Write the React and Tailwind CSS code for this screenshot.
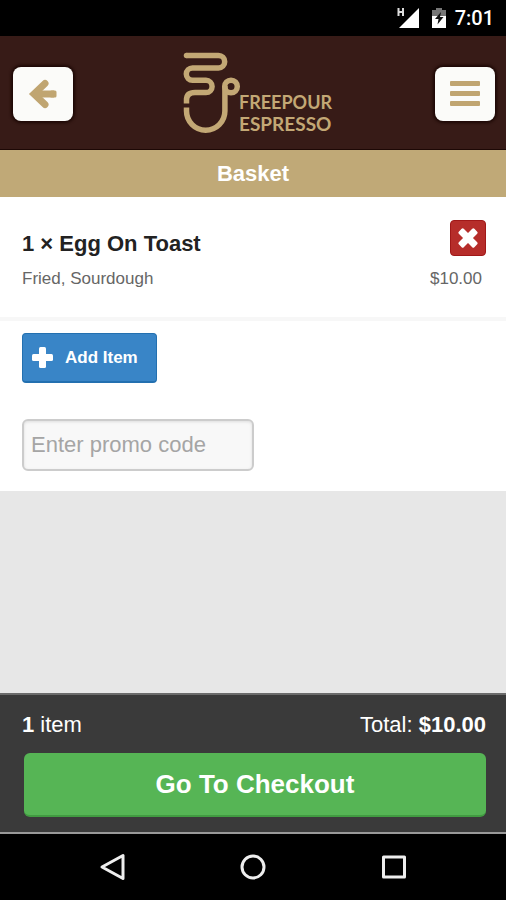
import React, { useState } from 'react';

const StatusBar = () => (
    <div className="flex h-9 items-center justify-end gap-2 bg-black pr-3 text-white">
        <svg width="22" height="22" viewBox="0 0 22 22" aria-hidden="true">
            <path d="M1.500 1v8M6 1v8M1.500 5H6" stroke="#ddd" strokeWidth="2" fill="none" />
            <path d="M22 1v20H2z" fill="#fff" />
        </svg>
        <svg className="ml-1" width="16" height="22" viewBox="0 0 16 22" aria-hidden="true">
            <path d="M5 1h6v2h4v8H1V3h4z" fill="#777" />
            <path d="M1 9h14v12H1z" fill="#fff" />
            <path d="M10 5 4 12h3.500l-1 5.500L12.500 10H9z" fill="#111" />
        </svg>
        <span className="font-['Roboto',sans-serif] text-xl font-medium">7:01</span>
    </div>
);

const Logo = () => (
    <svg width="160" height="84" viewBox="-8 0 160 84" role="img" aria-label="Freepour Espresso">
        <g fill="none" stroke="#c3a875" strokeWidth="5.500">
            <path d="M4.500 3.500H36.500a6.200 6.200 0 0 1 0 12.400H10.500a6.200 6.200 0 0 0 0 12.400H24a6 6 0 0 1 0 12.200H13Q4.500 40.500 4.500 48V51.500" />
            <path d="M4.500 55.500v3.500a19.200 19.200 0 0 0 38.400 0V34" />
            <circle cx="49" cy="34.500" r="6.300" />
        </g>
        <circle cx="4.500" cy="3.500" r="2.750" fill="#c3a875" />
        <g fill="#c3a875" fontFamily="Lato, sans-serif" fontWeight="700">
            <text x="57" y="57" fontSize="18">FREEPOUR</text>
            <text x="57" y="79" fontSize="19">ESPRESSO</text>
        </g>
    </svg>
);

const ArrowIcon = () => (
    <svg width="30" height="32" viewBox="0 0 30 32" fill="none" stroke="currentColor" strokeWidth="7" aria-hidden="true">
        <path d="M17 5.500 6 16l11 10.500" strokeLinecap="round" strokeLinejoin="miter" />
        <path d="M6 16h20" />
        <rect x="22" y="12.500" width="6.500" height="7" rx="1.500" fill="currentColor" stroke="none" />
    </svg>
);

const PlusIcon = () => (
    <svg width="21" height="21" viewBox="0 0 21 21" fill="currentColor" aria-hidden="true">
        <rect x="7" y="0" width="7" height="21" rx="1.500" />
        <rect x="0" y="7" width="21" height="7" rx="1.500" />
    </svg>
);

const CloseIcon = () => (
    <svg width="22" height="22" viewBox="0 0 22 22" fill="currentColor" aria-hidden="true">
        <g transform="rotate(45 11 11)">
            <rect x="7.500" y="0" width="7" height="22" rx="1.500" />
            <rect x="0" y="7.500" width="22" height="7" rx="1.500" />
        </g>
    </svg>
);

const Header = () => (
    <header className="border-b border-[#1d0805] bg-[#371b17]">
        <div className="flex h-[113px] items-center justify-between pt-[2px] pr-[11px] pl-[13px]">
            <button aria-label="Back" className="flex h-[54px] w-[60px] items-center justify-center rounded-lg bg-[#fbfbf9] text-[#c0a571] shadow-[0_0_3px_2px_#1d0805]">
                <ArrowIcon />
            </button>
            <Logo />
            <button aria-label="Menu" className="flex h-[54px] w-[60px] flex-col items-center justify-center gap-[5px] rounded-lg bg-[#fbfbf9] shadow-[0_0_3px_2px_#1d0805]">
                <span className="h-[5px] w-[30px] rounded-[1px] bg-[#c0a571]" />
                <span className="h-[5px] w-[30px] rounded-[1px] bg-[#c0a571]" />
                <span className="h-[5px] w-[30px] rounded-[1px] bg-[#c0a571]" />
            </button>
        </div>
    </header>
);

const BasketItem = ({ item, onRemove }) => (
    <li className="flex h-[124px] justify-between border-b-4 border-[#f7f7f7] pt-[23px] pr-5 pl-[22px]">
        <div className="pt-2">
            <h2 className="text-[22px] leading-8 font-bold text-[#222]">{item.qty} × {item.name}</h2>
            <p className="mt-1 text-[17px] leading-[30px] text-[#666]">{item.options}</p>
        </div>
        <div className="flex flex-col items-end">
            <button
                aria-label={`Remove ${item.name}`}
                onClick={() => onRemove(item.id)}
                className="flex h-9 w-9 items-center justify-center rounded-sm border border-[#a01818] bg-[#b62d2a] text-white"
            >
                <CloseIcon />
            </button>
            <p className="mt-2 pr-1 text-[17px] leading-[30px] text-[#666]">{item.price}</p>
        </div>
    </li>
);

const NavBar = () => (
    <nav className="flex h-[68px] items-center justify-center gap-[113px] border-t-2 border-[#999] bg-black">
        <button aria-label="Back">
            <svg width="28" height="28" viewBox="0 0 28 28" fill="none" stroke="#eee" strokeWidth="3" strokeLinejoin="round">
                <path d="M25 2.500v23L4 14z" />
            </svg>
        </button>
        <button aria-label="Home">
            <svg width="28" height="28" viewBox="0 0 28 28" fill="none" stroke="#eee" strokeWidth="3">
                <circle cx="14" cy="14" r="11" />
            </svg>
        </button>
        <button aria-label="Recent apps">
            <svg width="28" height="28" viewBox="0 0 28 28" fill="none" stroke="#eee" strokeWidth="3" strokeLinejoin="round">
                <rect x="3.500" y="4" width="21" height="20" />
            </svg>
        </button>
    </nav>
);

const App = () => {
    const [items, setItems] = useState([
        { id: 1, qty: 1, name: 'Egg On Toast', options: 'Fried, Sourdough', price: '$10.00' }
    ]);
    const [promo, setPromo] = useState('');

    const removeItem = (id) => setItems(prev => prev.filter(i => i.id !== id));

    return (
        <div className="flex min-h-screen flex-col bg-[#e7e7e7] font-['Liberation_Sans',Arial,sans-serif]">
            <StatusBar />
            <Header />
            <h1 className="bg-[#c0a977] pt-[1px] text-center text-[22px] leading-[46px] font-bold text-white">Basket</h1>

            <main className="flex-1">
                <div className="bg-white">
                    <ul>
                        {items.map(item => (
                            <BasketItem key={item.id} item={item} onRemove={removeItem} />
                        ))}
                    </ul>
                    <div className="flex flex-col items-start px-[22px] pt-3 pb-5">
                        <button className="flex h-[50px] w-[135px] items-center gap-3 rounded-sm border border-b-2 border-[#2370b0] bg-[#3985c7] pl-[9px] text-[17px] font-bold text-white">
                            <PlusIcon />
                            Add Item
                        </button>
                        <input
                            type="text"
                            aria-label="Promo code"
                            placeholder="Enter promo code"
                            value={promo}
                            onChange={(e) => setPromo(e.target.value)}
                            className="mt-9 h-[52px] w-[232px] rounded-md border-2 border-[#ccc] bg-[#f8f8f8] px-[7px] text-[22px] text-[#444] shadow-[inset_0_1px_3px_#ddd] placeholder:text-[#a5a5a5]"
                        />
                    </div>
                </div>
            </main>

            <footer className="border-t-2 border-[#6b6b6b] bg-[#3a3a3a] px-5 pt-[14px] pb-[15px]">
                <div className="flex justify-between pl-[2px] text-[22px] leading-8 text-white">
                    <span><b>1</b> item</span>
                    <span>Total: <b>$10.00</b></span>
                </div>
                <div className="pt-3 pl-1">
                    <button className="h-16 w-full rounded-md border-b-2 border-[#419b41] bg-[#56b555] text-[26px] font-bold text-white">
                        Go To Checkout
                    </button>
                </div>
            </footer>
            <NavBar />
        </div>
    );
};

export default App;
